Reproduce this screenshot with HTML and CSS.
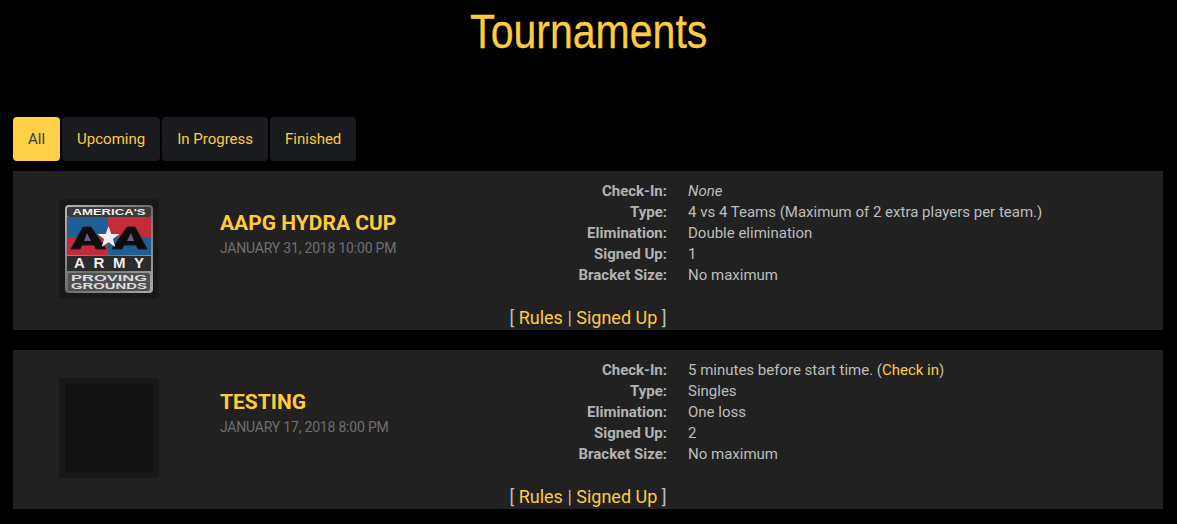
FILE: index.html
```html
<!DOCTYPE html>
<html lang="en">
<head>
<meta charset="utf-8">
<title>Tournaments</title>
<link rel="stylesheet" href="styles.css">
</head>
<body>
<h1 class="page-title"><span class="page-title-text">Tournaments</span></h1>
<nav class="tabs">
  <a class="tab tab-active">All</a>
  <a class="tab">Upcoming</a>
  <a class="tab">In Progress</a>
  <a class="tab">Finished</a>
</nav>
<section class="card">
  <div class="card-main">
    <div class="logo-col">
      <div class="logo-box">
        <svg class="logo" viewBox="0 0 88 88" width="88" height="88">
          <defs>
            <linearGradient id="metal" x1="0" y1="0" x2="1" y2="1">
              <stop offset="0" stop-color="#b5b5b5"/>
              <stop offset="0.5" stop-color="#6d6d6d"/>
              <stop offset="1" stop-color="#a8a8a8"/>
            </linearGradient>
          </defs>
          <rect x="0" y="0" width="88" height="88" rx="4" fill="url(#metal)"/>
          <rect x="2" y="2" width="84" height="10" rx="2" fill="#3a3a3a"/>
          <text x="44" y="10" class="logo-t1" textLength="73" lengthAdjust="spacingAndGlyphs">AMERICA'S</text>
          <rect x="2" y="12" width="41" height="20" fill="#1f5f96"/>
          <rect x="43" y="12" width="43" height="20" fill="#c42a3a"/>
          <rect x="2" y="32" width="41" height="18" fill="#c42a3a"/>
          <rect x="43" y="32" width="43" height="18" fill="#1f5f96"/>
          <path d="M6 44 L18 22 H26 L41 44 H31 L29 40 H17 L15 44 Z" fill="#0c0c0c" stroke="#1a1a1a" stroke-width="1"/>
          <path d="M82 44 L70 22 H62 L47 44 H57 L59 40 H71 L73 44 Z" fill="#0c0c0c" stroke="#1a1a1a" stroke-width="1"/>
          <path d="M19 36 H26 L22 28 Z M62 36 H69 L66 28 Z" fill="#6a5a90"/>
          <path d="M43.500 21 L46.300 29 H54.500 L47.900 34 L50.300 42 L43.500 37.200 L36.700 42 L39.100 34 L32.500 29 H40.700 Z" fill="#f2f2f2"/>
          <rect x="2" y="51" width="84" height="15" fill="#2b2b2b"/>
          <text x="44" y="63" class="logo-t2" textLength="70" lengthAdjust="spacing">ARMY</text>
          <rect x="3" y="68" width="82" height="18" rx="2" fill="#505050"/>
          <text x="44" y="76" class="logo-t3" textLength="76" lengthAdjust="spacingAndGlyphs">PROVING</text>
          <text x="44" y="84" class="logo-t3" textLength="76" lengthAdjust="spacingAndGlyphs">GROUNDS</text>
        </svg>
      </div>
    </div>
    <div class="title-col">
      <h2 class="event-name">AAPG HYDRA CUP</h2>
      <div class="event-date">JANUARY 31, 2018 10:00 PM</div>
    </div>
    <dl class="details">
      <dt>Check-In:</dt><dd><em>None</em></dd>
      <dt>Type:</dt><dd>4 vs 4 Teams (Maximum of 2 extra players per team.)</dd>
      <dt>Elimination:</dt><dd>Double elimination</dd>
      <dt>Signed Up:</dt><dd>1</dd>
      <dt>Bracket Size:</dt><dd>No maximum</dd>
    </dl>
  </div>
  <div class="card-links">[ <a>Rules</a> | <a>Signed Up</a> ]</div>
</section>
<section class="card">
  <div class="card-main">
    <div class="logo-col">
      <div class="logo-box"><div class="logo-empty"></div></div>
    </div>
    <div class="title-col">
      <h2 class="event-name">TESTING</h2>
      <div class="event-date">JANUARY 17, 2018 8:00 PM</div>
    </div>
    <dl class="details">
      <dt>Check-In:</dt><dd>5 minutes before start time. (<a>Check in</a>)</dd>
      <dt>Type:</dt><dd>Singles</dd>
      <dt>Elimination:</dt><dd>One loss</dd>
      <dt>Signed Up:</dt><dd>2</dd>
      <dt>Bracket Size:</dt><dd>No maximum</dd>
    </dl>
  </div>
  <div class="card-links">[ <a>Rules</a> | <a>Signed Up</a> ]</div>
</section>
</body>
</html>
```
FILE: styles.css
```css
* { box-sizing: border-box; }
html, body { margin: 0; padding: 0; }
body {
  background: #000;
  color: #bdbdbd;
  font-family: Roboto, sans-serif;
  font-size: 15px;
  overflow: hidden;
  height: 524px;
}
a { color: #ffcb3f; }

.page-title {
  margin: 0;
  height: 117px;
  padding-top: 5px;
  text-align: center;
  font-family: "Liberation Sans", sans-serif;
  font-weight: 400;
  font-size: 48px;
  line-height: 54px;
  color: #ffcb3f;
}
.page-title-text {
  display: inline-block;
  transform: scaleX(0.855);
  -webkit-text-stroke: 0.3px #ffcb3f;
}

.tabs {
  display: flex;
  gap: 2px;
  margin: 0 0 10px 13px;
}
.tab {
  display: block;
  height: 44px;
  line-height: 44px;
  padding: 0 15px;
  border-radius: 4px;
  background: #1a1b1f;
  font-size: 15px;
}
.tab-active {
  background: #ffcf48;
  color: #3a3a3a;
}

.card {
  margin: 0 14px 20px 13px;
  height: 159px;
  background: #212121;
  display: flex;
  flex-direction: column;
}
.card-main {
  display: flex;
  flex: 1;
  min-height: 0;
}
.logo-col {
  width: 192px;
  padding: 28px 0 0 46px;
  flex: none;
}
.logo-box {
  width: 100px;
  height: 100px;
  padding: 6px;
  border-radius: 4px;
  background: #191919;
}
.logo { display: block; }
.logo-empty { width: 88px; height: 88px; background: #111; }
.logo-t1, .logo-t2, .logo-t3 {
  font-family: "Liberation Sans", sans-serif;
  font-weight: 700;
  fill: #efefef;
  text-anchor: middle;
}
.logo-t1 { font-size: 8.500px; }
.logo-t2 { font-size: 15px; }
.logo-t3 { font-size: 8.500px; fill: #dedede; }

.title-col {
  width: 265px;
  padding: 0 0 0 15px;
  flex: none;
}
.event-name {
  margin: 39px 0 0;
  font-size: 21px;
  line-height: 26px;
  font-weight: 700;
  color: #ffcb3f;
}
.event-date {
  margin-top: 2px;
  font-size: 14px;
  letter-spacing: -0.2px;
  line-height: 20px;
  color: #6f6f6f;
}

.details {
  margin: 10px 0 0;
  display: grid;
  grid-template-columns: 197px 1fr;
  column-gap: 21px;
  grid-auto-rows: 21px;
  line-height: 21px;
  flex: 1;
}
.details dt {
  text-align: right;
  font-weight: 700;
  color: #b3b3b3;
}
.details dd { margin: 0; }

.card-links {
  text-align: center;
  font-size: 18px;
  line-height: 24px;
  padding: 0;
}
```
